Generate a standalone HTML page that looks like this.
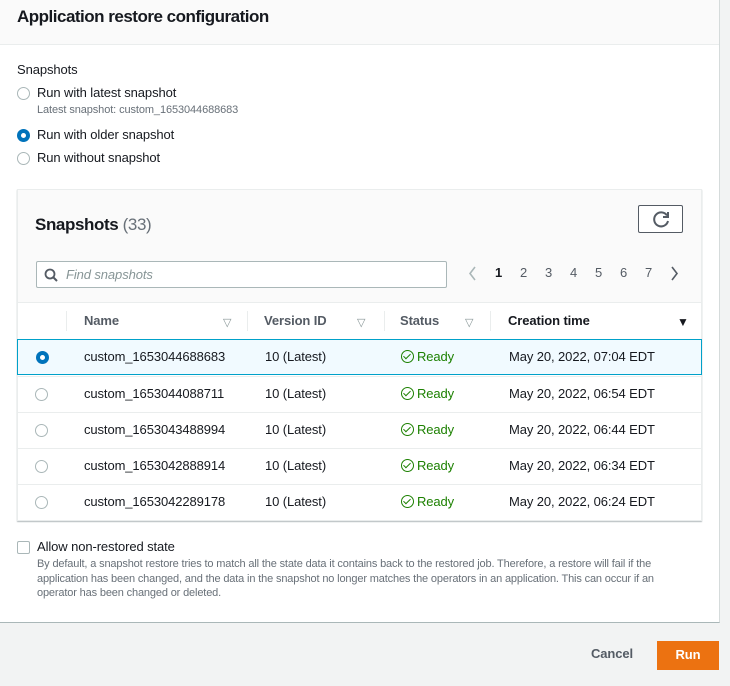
<!DOCTYPE html>
<html><head><meta charset="utf-8"><style>
*{box-sizing:border-box;margin:0;padding:0}
body{width:730px;height:686px;background:#f2f3f3;font-family:"Liberation Sans",sans-serif;color:#16191f;position:relative;overflow:hidden;font-size:13px;letter-spacing:-0.1px}
.a{position:absolute;white-space:nowrap}
.card{position:absolute;left:0;top:0;width:720px;height:623px;background:#fff;border-right:1px solid #d5dbdb;border-bottom:1px solid #aab7b8}
.hdr{position:absolute;left:0;top:0;width:719px;height:45px;background:#fafafa;border-bottom:1px solid #eaeded}
.radio{position:absolute;width:13px;height:13px;border-radius:50%;border:1px solid #aab7b8;background:#fff}
.radio.on{border:4px solid #0073bb}
.tbl{position:absolute;left:17px;top:189px;width:685px;height:332px;background:#fff;border:1px solid #eaeded;box-shadow:0 1px 1px rgba(0,28,36,.3)}
.top{position:absolute;left:0;top:0;width:683px;height:113px;background:#fafafa;border-bottom:1px solid #eaeded}
.row{position:absolute;left:0;width:683px;height:36px;border-top:1px solid #eaeded}
.sel{background:#f1faff;border:1px solid #00a1c9;left:-1px;width:685px}
.c{position:absolute;top:9px}
.th{font-weight:bold;color:#545b64;top:123px}
.sep{position:absolute;top:121px;width:1px;height:20px;background:#eaeded}
.tri{position:absolute;top:126px;font-size:11px;color:#879596}
.ready{color:#1d8102}
.chk{display:inline-block;width:13px;height:13px;border:1.5px solid #1d8102;border-radius:50%;vertical-align:-2px;margin-right:3px;position:relative}
.chk:after{content:"";position:absolute;left:3px;top:1px;width:3px;height:6px;border:solid #1d8102;border-width:0 1.5px 1.5px 0;transform:rotate(45deg)}
</style></head><body>
<div class="card">
<div class="hdr"><div class="a" style="left:17px;top:7px;font-size:17px;font-weight:bold;letter-spacing:-0.5px">Application restore configuration</div></div>
<div class="a" style="left:17px;top:62px">Snapshots</div>
<div class="radio" style="left:17px;top:87px"></div><div class="a" style="left:37px;top:85px">Run with latest snapshot</div>
<div class="a" style="left:37px;top:104px;font-size:11px;color:#687078">Latest snapshot: custom_1653044688683</div>
<div class="radio on" style="left:17px;top:129px"></div><div class="a" style="left:37px;top:127px">Run with older snapshot</div>
<div class="radio" style="left:17px;top:152px"></div><div class="a" style="left:37px;top:150px">Run without snapshot</div>

<div class="tbl">
<div class="top"></div>
<div class="a" style="left:17px;top:25px;font-size:17px;font-weight:bold;letter-spacing:-0.4px">Snapshots <span style="font-weight:normal;color:#687078">(33)</span></div>
<div class="a" style="left:620px;top:15px;width:45px;height:28px;border:1px solid #545b64;border-radius:2px;background:#fff">
<svg width="45" height="28" viewBox="0 0 45 28"><path d="M28 9.5A7 7 0 1 0 29 15" fill="none" stroke="#545b64" stroke-width="2"/><path d="M29 6v5h-5" fill="none" stroke="#545b64" stroke-width="2"/></svg></div>
<div class="a" style="left:18px;top:71px;width:411px;height:27px;border:1px solid #aab7b8;border-radius:2px;background:#fff">
<svg class="a" style="left:7px;top:6px" width="14" height="14"><circle cx="6" cy="6" r="4.5" fill="none" stroke="#545b64" stroke-width="1.8"/><path d="M9.5 9.5L13 13" stroke="#545b64" stroke-width="2"/></svg>
<span class="a" style="left:29px;top:5px;font-style:italic;color:#879596">Find snapshots</span></div>
<svg class="a" style="left:450px;top:76px" width="10" height="15"><path d="M7 1L2 7.5 7 14" fill="none" stroke="#aab7b8" stroke-width="1.6"/></svg>
<div class="a" style="left:477px;top:75px;font-weight:bold">1</div>
<div class="a" style="left:502px;top:75px;color:#545b64">2</div>
<div class="a" style="left:527px;top:75px;color:#545b64">3</div>
<div class="a" style="left:552px;top:75px;color:#545b64">4</div>
<div class="a" style="left:577px;top:75px;color:#545b64">5</div>
<div class="a" style="left:602px;top:75px;color:#545b64">6</div>
<div class="a" style="left:627px;top:75px;color:#545b64">7</div>
<svg class="a" style="left:651px;top:76px" width="10" height="15"><path d="M3 1L8 7.5 3 14" fill="none" stroke="#545b64" stroke-width="1.6"/></svg>

<div class="sep" style="left:48px"></div><div class="sep" style="left:229px"></div><div class="sep" style="left:366px"></div><div class="sep" style="left:472px"></div>
<div class="a th" style="left:66px">Name</div><div class="tri" style="left:205px">▽</div>
<div class="a th" style="left:246px">Version ID</div><div class="tri" style="left:339px">▽</div>
<div class="a th" style="left:382px">Status</div><div class="tri" style="left:447px">▽</div>
<div class="a th" style="left:490px;color:#16191f">Creation time</div><div class="a" style="left:659px;top:125px;font-size:12px">▼</div>

<div class="row sel" style="top:149px"><div class="radio on" style="left:18px;top:11px"></div><div class="a c" style="left:66px">custom_1653044688683</div><div class="a c" style="left:247px">10 (Latest)</div><div class="a c ready" style="left:383px"><span class="chk"></span>Ready</div><div class="a c" style="left:491px">May 20, 2022, 07:04 EDT</div></div>
<div class="row" style="top:186px"><div class="radio" style="left:17px;top:11px"></div><div class="a c" style="left:66px">custom_1653044088711</div><div class="a c" style="left:247px">10 (Latest)</div><div class="a c ready" style="left:383px"><span class="chk"></span>Ready</div><div class="a c" style="left:491px">May 20, 2022, 06:54 EDT</div></div>
<div class="row" style="top:222px"><div class="radio" style="left:17px;top:11px"></div><div class="a c" style="left:66px">custom_1653043488994</div><div class="a c" style="left:247px">10 (Latest)</div><div class="a c ready" style="left:383px"><span class="chk"></span>Ready</div><div class="a c" style="left:491px">May 20, 2022, 06:44 EDT</div></div>
<div class="row" style="top:258px"><div class="radio" style="left:17px;top:11px"></div><div class="a c" style="left:66px">custom_1653042888914</div><div class="a c" style="left:247px">10 (Latest)</div><div class="a c ready" style="left:383px"><span class="chk"></span>Ready</div><div class="a c" style="left:491px">May 20, 2022, 06:34 EDT</div></div>
<div class="row" style="top:294px"><div class="radio" style="left:17px;top:11px"></div><div class="a c" style="left:66px">custom_1653042289178</div><div class="a c" style="left:247px">10 (Latest)</div><div class="a c ready" style="left:383px"><span class="chk"></span>Ready</div><div class="a c" style="left:491px">May 20, 2022, 06:24 EDT</div></div>
</div>

<div class="a" style="left:17px;top:541px;width:13px;height:13px;border:1px solid #aab7b8;border-radius:2px"></div>
<div class="a" style="left:37px;top:539px">Allow non-restored state</div>
<div class="a" style="left:37px;top:557px;font-size:11px;color:#687078;line-height:14.5px;white-space:normal;width:650px;letter-spacing:-0.15px">By default, a snapshot restore tries to match all the state data it contains back to the restored job. Therefore, a restore will fail if the application has been changed, and the data in the snapshot no longer matches the operators in an application. This can occur if an operator has been changed or deleted.</div>
</div>
<div class="a" style="left:591px;top:646px;font-weight:bold;color:#545b64">Cancel</div>
<div class="a" style="left:657px;top:641px;width:62px;height:29px;background:#ec7211;color:#fff;font-weight:bold;text-align:center;line-height:27px">Run</div>
</body></html>
